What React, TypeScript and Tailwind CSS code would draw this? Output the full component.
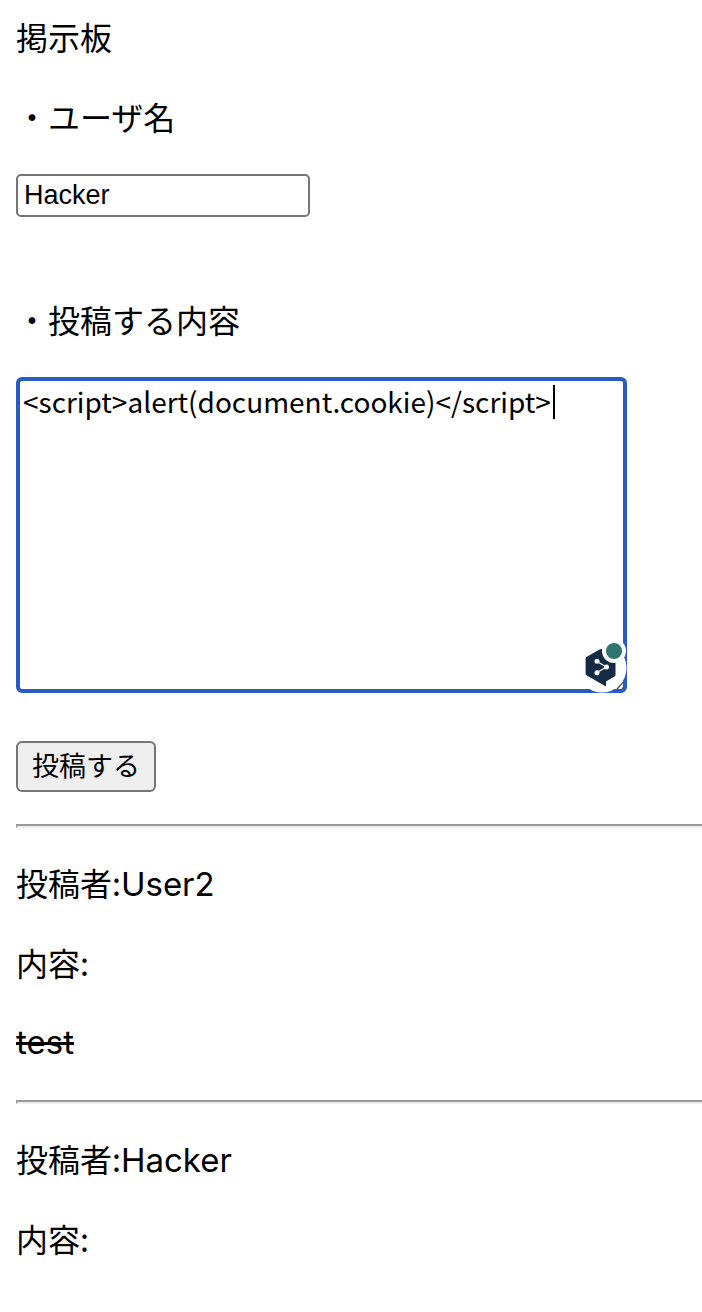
import { useState } from "react";

type Post = { author: string; body?: string };

const posts: Post[] = [{ author: "User2", body: "test" }, { author: "Hacker" }];

function AssistantBadge() {
  return (
    <svg viewBox="0 0 50 54" className="absolute right-0 bottom-0 h-[54px] w-[50px]" aria-hidden="true">
      <circle cx="25" cy="29" r="24.500" fill="#fff" />
      <path
        d="M22.500 10.600Q24.500 9.500 26.500 10.600L37.500 17Q38.500 17.600 38.500 19V35.500Q38.500 37 37.500 37.600L29 42.500V47.500L10.200 36.800Q8.600 36 8.600 34V19.500Q8.600 18.500 9.500 18Z"
        fill="#142b46"
      />
      <path d="M20 22.500 29.500 28 20 33.500" fill="none" stroke="#fff" strokeWidth="1.200" />
      <circle cx="20" cy="22.300" r="2.500" fill="#fff" />
      <circle cx="29.500" cy="28" r="2.500" fill="#fff" />
      <circle cx="20" cy="33.700" r="2.500" fill="#fff" />
      <circle cx="37" cy="12" r="12" fill="#fff" />
      <circle cx="37" cy="12" r="8" fill="#30756f" />
      <path d="M40 50 46 43.500M45 50 46 48.500" stroke="#555" strokeWidth="1.300" />
    </svg>
  );
}

function Rule() {
  return <hr className="h-1 w-full border-2 border-r-0 border-t-[#9a9a9a] border-b-[#eeeeee] border-l-[#9a9a9a]" />;
}

export default function App() {
  const [name, setName] = useState("Hacker");
  const [content, setContent] = useState("<script>alert(document.cookie)</script>");

  return (
    <main className="flex flex-col gap-8 bg-white pt-[14px] pb-6 pl-4 font-['Noto_Sans_CJK_JP',sans-serif] text-[32px] leading-11 text-black">
      <form className="flex flex-col items-start" onSubmit={(e) => e.preventDefault()}>
        <h1>掲示板</h1>
        <label htmlFor="name" className="mt-9">
          ・ユーザ名
        </label>
        <input
          id="name"
          type="text"
          value={name}
          onChange={(e) => setName(e.target.value)}
          className="mt-9 h-[43px] w-[294px] rounded-[5px] border-2 border-[#767676] bg-white px-1.5 font-['Liberation_Sans',Arial,sans-serif] text-[27px] leading-8 outline-none"
        />
        <label htmlFor="content" className="mt-20">
          ・投稿する内容
        </label>
        <div className="relative mt-9 flex w-[611px] max-w-full">
          <textarea
            id="content"
            value={content}
            onChange={(e) => setContent(e.target.value)}
            className="h-[316px] w-full resize-none rounded-md border-4 border-[#285cc4] bg-white px-[3px] text-[28px] leading-10 caret-transparent outline-none"
          />
          <span className="absolute top-2 left-[537px] h-[34px] w-0.5 bg-black" aria-hidden="true" />
          <AssistantBadge />
        </div>
        <button
          type="submit"
          className="mt-12 h-[51px] rounded-md border-2 border-[#767676] bg-[#efefef] px-3.5 pb-1 text-[27px] leading-10"
        >
          投稿する
        </button>
      </form>
      <section className="flex flex-col gap-9">
        {posts.map((post) => (
          <article key={post.author} className="flex flex-col gap-8">
            <Rule />
            <div className="flex flex-col gap-9">
              <p>
                投稿者:<span className="font-['Inter',sans-serif] text-[33px] leading-none">{post.author}</span>
              </p>
              <p>内容:</p>
              {post.body && (
                <p className="font-['Inter',sans-serif] text-[33px]">
                  <s>{post.body}</s>
                </p>
              )}
            </div>
          </article>
        ))}
      </section>
    </main>
  );
}
